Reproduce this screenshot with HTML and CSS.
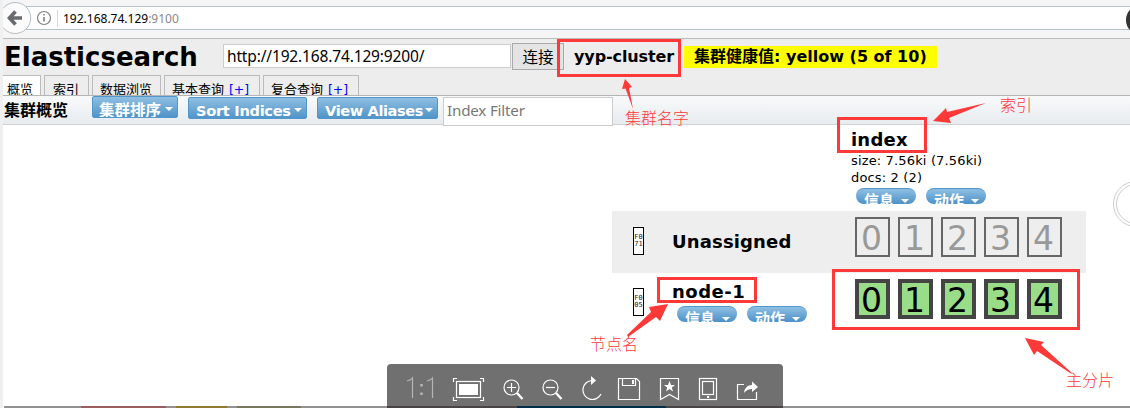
FILE: index.html
```html
<!DOCTYPE html>
<html lang="zh">
<head>
<meta charset="utf-8">
<title>Elasticsearch</title>
<link rel="stylesheet" href="styles.css">
</head>
<body>
<div class="page">
  <div class="browser-bar">
    <svg class="nav-icons" width="60" height="38" viewBox="0 0 60 38">
      <path d="M3 8.500A15.500 15.500 0 1 1 3 27.500" fill="#fbfbfb" stroke="#b4bec6"/>
      <path d="M15.500 11.500 L9.500 18 L15.500 24.500 M10 18 H22" fill="none" stroke="#696b70" stroke-width="3.600"/>
      <circle cx="44" cy="18" r="6.500" fill="none" stroke="#808080" stroke-width="1.200"/>
      <path d="M44 17 V21.500 M44 14 V15.600" stroke="#808080" stroke-width="1.600"/>
      <path d="M57.500 10 V27" stroke="#d5d8da"/>
    </svg>
    <div class="address"><span class="host">192.168.74.129</span><span class="port">:9100</span></div>
  </div>
  <header class="header">
    <div class="connect-row">
      <h1 class="brand">Elasticsearch</h1>
      <div class="uri">http://192.168.74.129:9200/</div>
      <div class="connect">连接</div>
      <div class="cluster">yyp-cluster</div>
      <div class="health"><span class="health-cn">集群健康值</span>: yellow (5 of 10)</div>
    </div>
    <nav class="tabs">
      <div class="tab active">概览</div>
      <div class="tab t-index">索引</div>
      <div class="tab t-browse">数据浏览</div>
      <div class="tab t-query">基本查询 <span class="plus">[+]</span></div>
      <div class="tab t-query">复合查询 <span class="plus">[+]</span></div>
    </nav>
  </header>
  <div class="toolbar">
    <div class="toolbar-title">集群概览</div>
    <div class="menu m-cluster"><span>集群排序</span><i class="caret"></i></div>
    <div class="menu m-sort"><span>Sort Indices</span><i class="caret"></i></div>
    <div class="menu m-alias"><span>View Aliases</span><i class="caret"></i></div>
    <div class="filter">Index Filter</div>
  </div>
  <main class="cluster-table">
    <section class="index-head">
      <h2 class="index-name">index</h2>
      <div class="stat">size: 7.56ki (7.56ki)</div>
      <div class="stat">docs: 2 (2)</div>
      <div class="actions"><div class="pill"><span>信息</span><i class="caret"></i></div><div class="pill"><span>动作</span><i class="caret"></i></div></div>
    </section>
    <section class="node unassigned">
      <div class="glyph"><span>F0</span><span>71</span></div>
      <div class="node-label"><h2>Unassigned</h2></div>
      <div class="shards"><b>0</b><b>1</b><b>2</b><b>3</b><b>4</b></div>
    </section>
    <section class="node primary">
      <div class="glyph"><span>F0</span><span>05</span></div>
      <div class="node-label"><h2>node-1</h2>
        <div class="actions"><div class="pill"><span>信息</span><i class="caret"></i></div><div class="pill"><span>动作</span><i class="caret"></i></div></div>
      </div>
      <div class="shards"><b>0</b><b>1</b><b>2</b><b>3</b><b>4</b></div>
    </section>
  </main>

  <svg class="taskbar" width="1130" height="2" viewBox="0 0 1130 2">
    <path fill="#929292" d="M4 0H1130V2H4z"/>
    <path fill="#9b5d5d" d="M81 0H166V2H81z"/>
    <path fill="#8f7a30" d="M176 0H227V2H176z"/>
    <path fill="#78785f" d="M237 0H301V2H237z"/>
    <path fill="#484445" d="M387 0H783V2H387z"/>
    <path fill="#003049" d="M517 0H666V2H517z"/>
  </svg>

  <svg class="viewer" width="396" height="42" viewBox="387 364 396 42">
    <path d="M387 406V368Q387 364 391 364H779Q783 364 783 368V406z" fill="#707070"/>
    <g fill="none" stroke="#b5b5b5" stroke-width="1.200">
      <path d="M407 381 Q411 380 412.500 378 V398 M427 381 Q431 380 432.500 378 V398"/>
      <path d="M421.500 384v2.500M421.500 392.500v2.500" stroke-width="2.500"/>
    </g>
    <g fill="none" stroke="#fff" stroke-width="1.200">
      <path d="M453.500 382V378.500H457M480 378.500H483.500V382M483.500 397V400.500H480M457 400.500H453.500V397"/>
      <rect x="456.500" y="381.500" width="24" height="16"/>
      <rect x="459" y="384" width="19" height="11" fill="#fff" stroke="none"/>
      <circle cx="511.500" cy="387.500" r="7.500"/><path d="M507 387.500h9M511.500 383v9"/>
      <path d="M517 393l5.500 6" stroke-width="2.400"/>
      <circle cx="550.500" cy="387.500" r="7.500"/><path d="M546 387.500h9"/>
      <path d="M556 393l5.500 6" stroke-width="2.400"/>
      <path d="M592 380.500A9.500 9.500 0 1 0 601 394"/>
      <path d="M591 376l5 4.500-5 4.500z" fill="#fff" stroke="none"/>
      <path d="M618.500 378.500H636.500L639.500 381.500V399.500H618.500zM622.500 378.500V385.500H635.500V378.500"/>
      <path d="M633 380v4" stroke-width="2"/>
      <path d="M660.500 378.500H678.500V399.500L669.500 394.500L660.500 399.500z"/>
      <path d="M669.500 381l1.500 4h4l-3.200 2.500 1.200 4-3.500-2.400-3.500 2.400 1.200-4-3.200-2.500h4z" fill="#fff" stroke="none"/>
      <rect x="699.500" y="378.500" width="17" height="21"/><rect x="702.500" y="381.500" width="11" height="13"/>
      <path d="M707 397h2.200" stroke-width="2"/>
      <path d="M744 384.500H737.500V399.500H756.500V392"/>
      <path d="M744 393Q745 385 752 385V381.500L758 387L752 392V389Q747 389 744 393z" fill="#fff" stroke="none"/>
    </g>
  </svg>

  <svg class="notes" width="1130" height="408" viewBox="0 0 1130 408">
    <g fill="none" stroke="#ff3838" stroke-width="3">
      <rect x="558.500" y="40.500" width="121" height="35"/>
      <rect x="838.500" y="118.500" width="87" height="33"/>
      <rect x="658.500" y="278.500" width="97" height="23"/>
      <rect x="833.500" y="270.500" width="245" height="58"/>
    </g>
    <g fill="#ff3838">
      <path d="M625 79L632 87L629 88L633 109L625.500 88.500L622 89z"/>
      <path d="M933 121L946 108L947 112L986 103L949 118L951 123z"/>
      <path d="M668 304L660 321L656 317L628 337L627 335L651 312L649 307z"/>
      <path d="M1025 338L1044 342L1041 345L1073 374L1070 373L1037 351L1034 355z"/>
    </g>
    <g class="note-text">
      <text x="625" y="124">集群名字</text>
      <text x="1000" y="111">索引</text>
      <text x="590" y="350">节点名</text>
      <text x="1066" y="386">主分片</text>
    </g>
    <circle cx="1136" cy="204" r="22.500" fill="#fff" stroke="#ccc"/>
    <circle cx="1136" cy="204" r="19.500" fill="none" stroke="#ccc"/>
    <circle cx="1141" cy="20" r="15" fill="#343434"/>
  </svg>
</div>
</body>
</html>
```
FILE: styles.css
```css
* { box-sizing: border-box; }
body { margin: 0; background: #fff; }
h1, h2 { margin: 0; }
.page {
  position: relative; width: 1130px; height: 408px; overflow: hidden;
  border-left: 3px solid #f0f0f0; color: #000; white-space: nowrap;
  font-family: "DejaVu Sans", "Noto Sans CJK SC", sans-serif;
}
.browser-bar { display: flex; height: 39px; background: #f5f5f5; border-bottom: 1px solid #bbb; padding-top: 6px; }
.nav-icons { flex: none; margin: -6px 0 0 -3px; z-index: 1; }
.address {
  flex: 1; height: 24px; margin-left: -44px; padding-left: 46px; background: #fff;
  border: 1px solid #b5c1c9; border-right: 0; font: 12px/23px "Noto Sans", sans-serif;
}
.port { color: #888; }
.header { height: 57px; background: #ededed; border-bottom: 1px solid #b5b5b5; }
.connect-row { display: flex; height: 36px; align-items: flex-start; }
.brand { width: 220px; padding-left: 1px; font-size: 26px; line-height: 37px; letter-spacing: 0; }
.uri {
  width: 288px; height: 24px; margin-top: 5px; padding-left: 3px; background: #fff;
  border: 1px solid #ccc; font: 15.5px/23px "Noto Sans", sans-serif; letter-spacing: -.15px;
}
.connect {
  width: 52px; height: 27px; margin: 4px 0 0 1px; border: 1px solid #aaa; background: #e4e4e4;
  font: 15.5px/24px "Noto Sans CJK SC", sans-serif; text-align: center;
}
.cluster { width: 120px; padding-left: 10px; font-weight: bold; font-size: 16px; line-height: 35px; letter-spacing: -.1px; }
.health {
  width: 253px; height: 22px; margin-top: 7px; padding-left: 10px; background: #ff0;
  font-weight: bold; font-size: 16px; line-height: 21px;
}
.tabs { display: flex; gap: 3px; height: 20px; overflow: hidden; }
.tab {
  height: 28px; border: 1px solid #bbb; padding-left: 8px; background: #ededed;
  font: 13px/25px "Noto Sans CJK SC", sans-serif;
}
.active { width: 38px; padding-left: 4px; border-left: 0; background: #fff; }
.t-index { width: 45px; }
.t-browse { width: 69px; padding-left: 7px; }
.t-query { width: 96px; padding-left: 7px; }
.plus { margin-left: 2px; color: #00f; font-family: "DejaVu Sans", sans-serif; font-size: 12.5px; }
.toolbar {
  display: flex; align-items: flex-start; height: 29px; border-bottom: 1px solid #d0d3d6;
  background: linear-gradient(#f8fafa, #e8ecef);
}
.toolbar-title { width: 89px; padding-left: 1px; font: bold 16px/27px "Noto Sans CJK SC", sans-serif; }
.menu {
  display: flex; align-items: center; justify-content: space-between; height: 22px; margin-top: 1px;
  padding: 4px 4px 0 7px; overflow: hidden; border: 1px solid #5297cb; border-radius: 2px;
  background: linear-gradient(#8fbfe2, #5094c9); color: #fff; font-weight: bold;
}
.m-cluster { width: 86px; margin: 0 10px 0 0; padding: 3px 4px 0 6px; font: bold 15.5px/18px "Noto Sans CJK SC", sans-serif; }
.m-sort { width: 119px; margin-right: 10px; font-size: 14.6px; letter-spacing: -.3px; }
.m-alias { width: 121px; margin-right: 5px; font-size: 14.6px; letter-spacing: -.4px; }
.caret { border: 4px solid transparent; border-top-color: #fff; border-bottom: 0; flex: none; }
.filter {
  width: 170px; height: 29px; margin-top: 1px; padding-left: 3px; background: #fff;
  border: 1px solid #ccc; color: #777; font: 15.2px/25px "Noto Sans", sans-serif; letter-spacing: -.2px;
}
.cluster-table { width: 474px; margin-left: 609px; }
.index-head { height: 86px; padding: 4px 0 0 239px; }
.index-name { font-size: 18px; line-height: 22px; letter-spacing: .2px; margin-bottom: 1px; }
.stat { font-size: 13px; line-height: 17px; letter-spacing: .15px; }
.actions { display: flex; gap: 10px; margin: 2px 0 0 5px; }
.pill {
  display: flex; align-items: flex-start; justify-content: space-between; width: 60px; height: 16px;
  padding: 0 7px 0 8px; overflow: hidden; border-top: 1px solid #5297cb; border-radius: 10px;
  background: linear-gradient(#8fbfe2, #4c91c8); color: #fff;
  font: bold 15px/22px "Noto Sans CJK SC", sans-serif;
}
.pill .caret { margin-top: 10px; }
.node { display: grid; grid-template-columns: 60px 183px 1fr; height: 62px; padding-top: 6px; }
.unassigned { background: #eee; }
.glyph {
  display: flex; flex-direction: column; align-items: center; justify-content: center;
  width: 11px; height: 28px; margin: 10px 0 0 21px; border: 1px solid #000; background: #fff;
  color: #222; font: 7px/7px "DejaVu Sans Mono", monospace;
}
.primary .glyph { margin-top: 9px; }
.node-label h2 { font-size: 18px; line-height: 25px; letter-spacing: .15px; }
.node-label .actions { gap: 10px; }
.unassigned .node-label h2 { line-height: 50px; }
.primary .actions { margin-top: 2px; }
.primary .node-label h2 { letter-spacing: .5px; }
.shards { display: flex; gap: 8px; }
.shards b {
  width: 35px; height: 40px; border: 2px solid #666; color: #999;
  font-size: 33px; line-height: 39px; font-weight: normal; text-align: center; text-indent: -2px;
}
.primary .shards b { border: 4px solid #444; background: #9d8; color: #000; line-height: 36px; }
.taskbar { position: absolute; left: -3px; bottom: 0; }
.viewer { position: absolute; left: 384px; top: 364px; }
.notes { position: absolute; left: -3px; top: 0; }
.note-text { fill: #ff3838; font: 300 16px "Noto Sans CJK SC", sans-serif; }
```
